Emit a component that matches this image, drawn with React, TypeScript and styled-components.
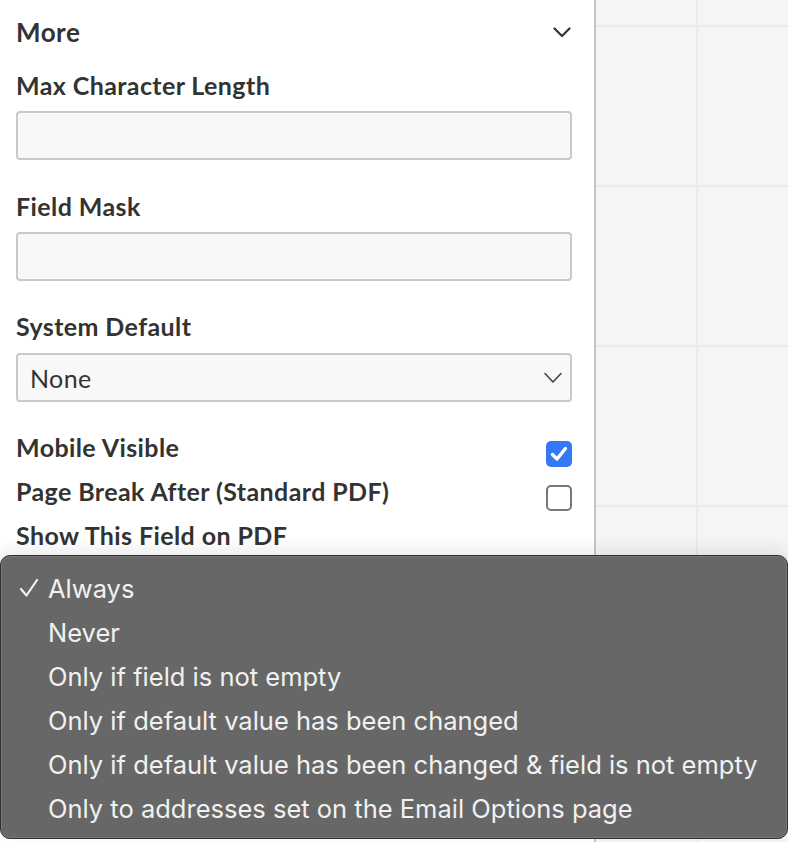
import React from "react";
import styled, { createGlobalStyle } from "styled-components";

const GlobalStyle = createGlobalStyle`
  html, body {
    margin: 0;
    padding: 0;
    overflow: hidden;
    background: #ffffff;
  }
`;

const options = [
  "Always",
  "Never",
  "Only if field is not empty",
  "Only if default value has been changed",
  "Only if default value has been changed & field is not empty",
  "Only to addresses set on the Email Options page",
];

export default function App() {
  return (
    <>
      <GlobalStyle />
      <Page>
        <Panel>
          <Header>
            <Heading>More</Heading>
            <Chevron width="18" height="11" viewBox="0 0 18 11" $color="#333" $stroke={2.2}>
              <polyline points="1.5,1.5 9,9 16.5,1.5" />
            </Chevron>
          </Header>

          <Label $gap={25}>Max Character Length</Label>
          <TextInput />

          <Label $gap={32}>Field Mask</Label>
          <TextInput />

          <Label $gap={31}>System Default</Label>
          <Select>
            <SelectValue>None</SelectValue>
            <Chevron width="18" height="12" viewBox="0 0 18 12" $color="#444" $stroke={1.6}>
              <polyline points="1,1.5 9,10 17,1.5" />
            </Chevron>
          </Select>

          <CheckRow $gap={31}>
            <Label as="span" $gap={0}>Mobile Visible</Label>
            <Checkbox $checked>
              <svg width="18" height="16" viewBox="0 0 18 16">
                <polyline
                  points="2.5,8.5 7,13 15.5,2.5"
                  fill="none"
                  stroke="#fff"
                  strokeWidth="3.4"
                  strokeLinecap="round"
                  strokeLinejoin="round"
                />
              </svg>
            </Checkbox>
          </CheckRow>

          <CheckRow $gap={16}>
            <Label as="span" $gap={0}>Page Break After (Standard PDF)</Label>
            <Checkbox />
          </CheckRow>

          <Label $gap={16}>Show This Field on PDF</Label>
        </Panel>
        <Divider />
        <Canvas />
      </Page>

      <Menu>
        {options.map((opt, i) => (
          <MenuItem key={opt}>
            <CheckSlot>
              {i === 0 && (
                <svg width="20" height="20" viewBox="0 0 20 20">
                  <polyline
                    points="2,11 7.5,17.5 18,2"
                    fill="none"
                    stroke="#f2f2f2"
                    strokeWidth="2.2"
                    strokeLinecap="round"
                    strokeLinejoin="round"
                  />
                </svg>
              )}
            </CheckSlot>
            {opt}
          </MenuItem>
        ))}
      </Menu>
    </>
  );
}

const Page = styled.div`
  display: grid;
  grid-template-columns: 594px 2px 1fr;
  width: 788px;
  height: 842px;
`;

const Panel = styled.div`
  display: flex;
  flex-direction: column;
  padding: 18px 22px 0 16px;
  background: #ffffff;
  font-family: Lato, "Liberation Sans", sans-serif;
  color: #333333;
  overflow: hidden;
`;

const Divider = styled.div`
  background: #c6c6c6;
`;

const Canvas = styled.div`
  background-color: #f5f5f5;
  background-image: linear-gradient(to right, #ebebeb 2px, transparent 2px),
    linear-gradient(to bottom, #ebebeb 2px, transparent 2px);
  background-size: 160px 160px;
  background-position: 100px 25px;
`;

const Header = styled.div`
  display: flex;
  align-items: center;
  justify-content: space-between;
  height: 28px;
  padding-right: 1px;
`;

const Heading = styled.div`
  font-size: 26px;
  line-height: 28px;
  font-weight: 700;
  letter-spacing: 0.5px;
`;

const Chevron = styled.svg<{ $color: string; $stroke: number }>`
  fill: none;
  stroke: ${(p) => p.$color};
  stroke-width: ${(p) => p.$stroke};
  stroke-linecap: round;
  stroke-linejoin: round;
`;

const Label = styled.div<{ $gap?: number }>`
  margin-top: ${(p) => (p.$gap ?? 24)}px;
  font-size: 25px;
  line-height: 28px;
  font-weight: 700;
  letter-spacing: 0.4px;
  white-space: nowrap;
`;

const TextInput = styled.div`
  margin-top: 12px;
  height: 45px;
  border: 2px solid #c9c9c9;
  border-radius: 4px;
  background: #f8f8f8;
`;

const Select = styled.div`
  margin-top: 13px;
  height: 45px;
  display: flex;
  align-items: center;
  justify-content: space-between;
  padding: 0 8px 0 12px;
  border: 2px solid #c9c9c9;
  border-radius: 4px;
  background: #f8f8f8;
`;

const SelectValue = styled.span`
  font-size: 25px;
  font-weight: 400;
  letter-spacing: 0.4px;
  color: #333333;
`;

const CheckRow = styled.div<{ $gap: number }>`
  margin-top: ${(p) => p.$gap}px;
  display: flex;
  justify-content: space-between;
  align-items: flex-start;
  height: 28px;
`;

const Checkbox = styled.div<{ $checked?: boolean }>`
  box-sizing: border-box;
  width: 26px;
  height: 26px;
  margin-top: 8px;
  border-radius: 5px;
  display: flex;
  align-items: center;
  justify-content: center;
  background: ${(p) => (p.$checked ? "#3478f6" : "#ffffff")};
  border: ${(p) => (p.$checked ? "none" : "2px solid #777777")};
`;

const Menu = styled.div`
  position: absolute;
  left: 0;
  top: 555px;
  width: 788px;
  height: 284px;
  box-sizing: border-box;
  padding-top: 10px;
  background: #676767;
  border: 1px solid #2f2f2f;
  border-radius: 10px;
  box-shadow: inset 0 0 0 1px rgba(255, 255, 255, 0.12),
    0 -6px 16px rgba(0, 0, 0, 0.08);
  font-family: Inter, "Liberation Sans", sans-serif;
  color: #f1f1f1;
`;

const MenuItem = styled.div`
  display: flex;
  align-items: center;
  height: 44px;
  font-size: 25.5px;
  white-space: nowrap;
`;

const CheckSlot = styled.span`
  display: inline-flex;
  align-items: center;
  justify-content: center;
  width: 47px;
  padding-left: 8px;
  box-sizing: border-box;
`;
